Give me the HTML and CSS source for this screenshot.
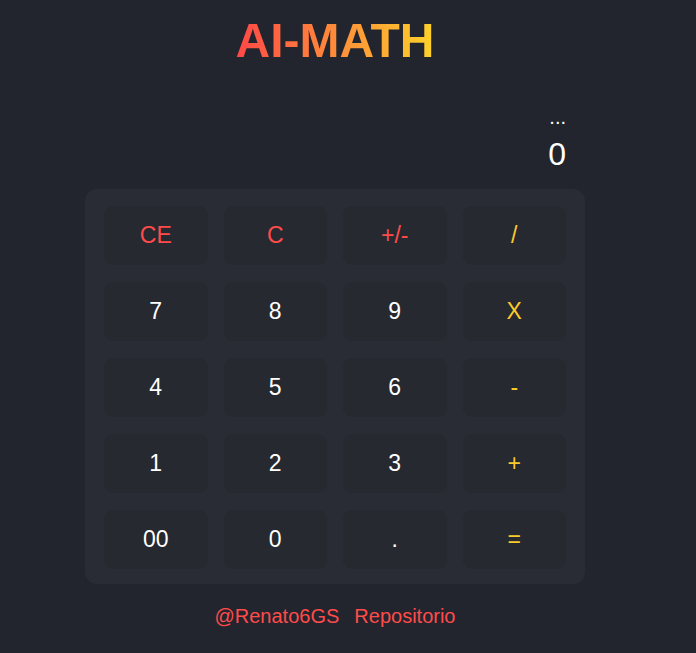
FILE: index.html
```html
<!DOCTYPE html>
<html lang="es">
<head>
<meta charset="utf-8">
<title>AI-MATH</title>
<link rel="stylesheet" href="styles.css">
</head>
<body>
<main class="app">
  <h1 class="title">AI-MATH</h1>
  <section class="display">
    <div class="display-prev">...</div>
    <div class="display-current">0</div>
  </section>
  <section class="keypad">
    <button class="key key-clear">CE</button>
    <button class="key key-clear">C</button>
    <button class="key key-clear">+/-</button>
    <button class="key key-op">/</button>
    <button class="key">7</button>
    <button class="key">8</button>
    <button class="key">9</button>
    <button class="key key-op">X</button>
    <button class="key">4</button>
    <button class="key">5</button>
    <button class="key">6</button>
    <button class="key key-op">-</button>
    <button class="key">1</button>
    <button class="key">2</button>
    <button class="key">3</button>
    <button class="key key-op">+</button>
    <button class="key">00</button>
    <button class="key">0</button>
    <button class="key">.</button>
    <button class="key key-op">=</button>
  </section>
  <footer class="footer">
    <a class="footer-link" href="#">@Renato6GS</a>
    <a class="footer-link" href="#">Repositorio</a>
  </footer>
</main>
</body>
</html>
```

FILE: styles.css
```css
* {
  box-sizing: border-box;
}

html, body {
  margin: 0;
  padding: 0;
  background: #22252d;
}

body {
  font-family: "Liberation Sans", Arial, sans-serif;
  color: #ffffff;
  height: 653px;
  overflow: hidden;
}

.app {
  width: 670px;
  display: flex;
  flex-direction: column;
  align-items: center;
}

.title {
  margin: 14px 0 0;
  font-size: 48px;
  line-height: 54px;
  font-weight: 700;
  background: linear-gradient(90deg, #ff4747 0%, #ff8c3a 50%, #fdd22a 100%);
  -webkit-background-clip: text;
  background-clip: text;
  color: transparent;
}

.display {
  width: 500px;
  margin-top: 39px;
  padding: 0 19px;
  text-align: right;
}

.display-prev {
  font-size: 20px;
  line-height: 20px;
}

.display-current {
  margin-top: 9px;
  font-size: 32px;
  line-height: 36px;
}

.keypad {
  width: 500px;
  margin-top: 17px;
  padding: 17px 19px 15px;
  background: #292c35;
  border-radius: 12px;
  display: grid;
  grid-template-columns: repeat(4, 1fr);
  grid-auto-rows: 59px;
  column-gap: 16px;
  row-gap: 17px;
}

.key {
  border: none;
  border-radius: 9px;
  background: #262930;
  color: #ffffff;
  font-family: "Liberation Sans", Arial, sans-serif;
  font-size: 23px;
  padding: 0;
  cursor: pointer;
}

.key-clear {
  color: #ff4b4b;
}

.key-op {
  color: #fccb2b;
}

.footer {
  margin-top: 20px;
  display: flex;
  gap: 15px;
}

.footer-link {
  color: #ff4b4b;
  text-decoration: none;
  font-size: 20px;
  line-height: 24px;
}
```
